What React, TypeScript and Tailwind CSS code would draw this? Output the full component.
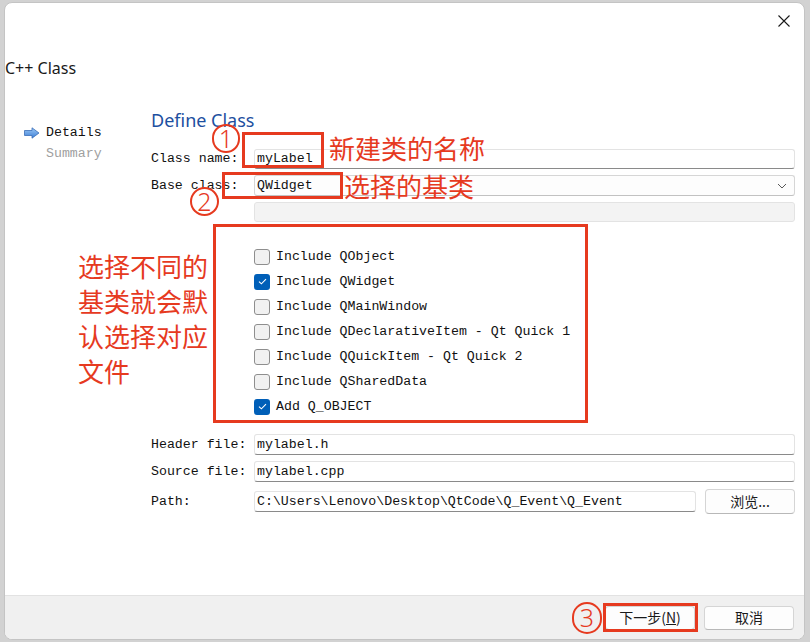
import React from "react";

const RED = "border-[#e63a1f]";

function Field({ label, value, h = "h-[21px]", kind = "input" }: { label: string; value?: string; h?: string; kind?: "input" | "combo" | "disabled" }) {
  const base =
    kind === "disabled"
      ? "bg-[#f3f3f3] border border-[#e3e3e3]"
      : kind === "combo"
      ? "bg-[#fdfdfd] border border-[#d6d6d6] border-b-[#c2c2c2]"
      : "bg-white border border-[#e3e3e3] border-b-[#8a8a8a]";
  return (
    <div className={`flex items-center ${h}`}>
      <div className="w-[103px] shrink-0 leading-[20px]">{label}</div>
      <div className={`flex-1 h-full rounded-[3px] ${base} flex items-center pl-[2px] pr-[6px]`}>
        <span className="flex-1 leading-[18px]">{value}</span>
        {kind === "combo" && (
          <svg width="10" height="6" viewBox="0 0 10 6" className="mr-[1px]">
            <path d="M1 1 L5 5 L9 1" stroke="#5a5a5a" strokeWidth="1" fill="none" />
          </svg>
        )}
      </div>
    </div>
  );
}

function Check({ checked, label }: { checked?: boolean; label: string }) {
  return (
    <div className="flex items-center h-[25px]">
      {checked ? (
        <div className="w-[16px] h-[16px] rounded-[3px] bg-[#005fb8] flex items-center justify-center">
          <svg width="9" height="7" viewBox="0 0 9 7">
            <path d="M1 3.6 L3.4 5.8 L8 1.2" stroke="white" strokeWidth="1.1" fill="none" />
          </svg>
        </div>
      ) : (
        <div className="w-[16px] h-[16px] rounded-[3px] bg-[#f1f1f1] border border-[#8e8e8e]" />
      )}
      <span className="ml-[6px] leading-[20px]">{label}</span>
    </div>
  );
}

function Circle({ n, className }: { n: string; className: string }) {
  return (
    <div
      className={`absolute rounded-full border-2 border-[#e63a1f] text-[#e63a1f] flex items-center justify-center font-['Noto_Sans',sans-serif] text-[25px] font-light leading-none ${className}`}
    >
      <span className="-mt-[1px]">{n}</span>
    </div>
  );
}

function Btn({ children, className = "" }: { children: React.ReactNode; className?: string }) {
  return (
    <div
      className={`w-[90px] h-[24px] rounded-[4px] bg-[#fdfdfd] border border-[#d5d5d5] border-b-[#b8b8b8] flex items-center justify-center text-[14px] font-['Noto_Sans_CJK_SC',sans-serif] text-[#1a1a1a] ${className}`}
    >
      {children}
    </div>
  );
}

export default function App() {
  return (
    <div className="relative w-[810px] h-[642px] overflow-hidden bg-[#d2d2d2]">
      <div className="ml-[4px] mt-[2px] w-[801px] h-[638px] rounded-[8px] bg-white border border-[#c4c4c4] flex flex-col overflow-hidden font-['Liberation_Mono',monospace] text-[13.25px] text-[#111]">
        {/* title bar */}
        <div className="h-[35px] flex justify-end items-center pr-[14px] shrink-0">
          <svg width="12" height="12" viewBox="0 0 12 12">
            <path d="M0.5 0.5 L11.5 11.5 M11.5 0.5 L0.5 11.5" stroke="#1a1a1a" strokeWidth="1.1" />
          </svg>
        </div>
        {/* header */}
        <div className="h-[62px] pt-[20px] shrink-0 font-['Noto_Sans',sans-serif] text-[16px] leading-[20px] text-[#1a1a1a]">
          C++ Class
        </div>
        {/* body */}
        <div className="flex-1 flex">
          <div className="w-[146px] shrink-0 pt-[22px] pl-[19px]">
            <div className="flex items-center h-[21px]">
              <svg width="16" height="12" viewBox="0 0 16 12" className="mr-[6px]">
                <defs>
                  <linearGradient id="ag" x1="0" y1="0" x2="0" y2="1">
                    <stop offset="0" stopColor="#9cc8f5" />
                    <stop offset="1" stopColor="#3d7fd6" />
                  </linearGradient>
                </defs>
                <path d="M0.5 3.5 H8 V0.8 L15 6 L8 11.2 V8.5 H0.5 Z" fill="url(#ag)" stroke="#3a6db8" strokeWidth="0.8" />
              </svg>
              <span>Details</span>
            </div>
            <div className="h-[21px] flex items-center pl-[22px] text-[#a0a0a0]">Summary</div>
          </div>
          <div className="flex-1 pr-[9px] pt-[8px] flex flex-col">
            <div className="h-[24px] leading-[24px] text-[18px] font-['Noto_Sans',sans-serif] text-[#1d4fa0]">Define Class</div>
            <div className="mt-[17px]">
              <Field label="Class name:" value="myLabel" h="h-[20px]" />
            </div>
            <div className="mt-[6px]">
              <Field label="Base class:" value="QWidget" kind="combo" />
            </div>
            <div className="mt-[6px]">
              <Field label="" kind="disabled" h="h-[20px]" />
            </div>
            <div className="mt-[22px] pl-[103px] flex flex-col">
              <Check label="Include QObject" />
              <Check checked label="Include QWidget" />
              <Check label="Include QMainWindow" />
              <Check label="Include QDeclarativeItem - Qt Quick 1" />
              <Check label="Include QQuickItem - Qt Quick 2" />
              <Check label="Include QSharedData" />
              <Check checked label="Add Q_OBJECT" />
            </div>
            <div className="mt-[15px]">
              <Field label="Header file:" value="mylabel.h" />
            </div>
            <div className="mt-[6px]">
              <Field label="Source file:" value="mylabel.cpp" />
            </div>
            <div className="mt-[7px] flex items-center h-[25px]">
              <div className="w-[103px] shrink-0">Path:</div>
              <div className="flex-1 h-[21px] rounded-[3px] bg-white border border-[#e3e3e3] border-b-[#8a8a8a] flex items-center pl-[2px]">
                C:\Users\Lenovo\Desktop\QtCode\Q_Event\Q_Event
              </div>
              <Btn className="ml-[9px] h-[25px]">浏览...</Btn>
            </div>
          </div>
        </div>
        {/* footer */}
        <div className="h-[44px] shrink-0 bg-[#f0f0f0] border-t border-[#e2e2e2] flex items-center justify-end gap-[9px] pr-[10px]">
          <Btn>
            下一步(<span className="underline">N</span>)
          </Btn>
          <Btn>取消</Btn>
        </div>
      </div>

      {/* annotations */}
      <div className={`absolute left-[242px] top-[132px] w-[82px] h-[36px] border-[3px] ${RED}`} />
      <div className={`absolute left-[222px] top-[172px] w-[121px] h-[27px] border-[3px] ${RED}`} />
      <div className={`absolute left-[213px] top-[224px] w-[375px] h-[199px] border-[3px] ${RED}`} />
      <div className={`absolute left-[603px] top-[603px] w-[95px] h-[29px] border-[3px] ${RED}`} />
      <Circle n="1" className="left-[212px] top-[124px] w-[28px] h-[29px]" />
      <Circle n="2" className="left-[190px] top-[187px] w-[29px] h-[29px]" />
      <Circle n="3" className="left-[572px] top-[602px] w-[30px] h-[32px]" />
      <div className="absolute left-[329px] top-[130px] text-[26px] leading-[35px] text-[#e63a1f] font-['Noto_Sans_CJK_SC',sans-serif] whitespace-nowrap">
        新建类的名称
      </div>
      <div className="absolute left-[344px] top-[168px] text-[26px] leading-[35px] text-[#e63a1f] font-['Noto_Sans_CJK_SC',sans-serif] whitespace-nowrap">
        选择的基类
      </div>
      <div className="absolute left-[78px] top-[248px] text-[26px] leading-[35px] text-[#e63a1f] font-['Noto_Sans_CJK_SC',sans-serif] whitespace-nowrap">
        <div>选择不同的</div>
        <div>基类就会默</div>
        <div>认选择对应</div>
        <div>文件</div>
      </div>
    </div>
  );
}
